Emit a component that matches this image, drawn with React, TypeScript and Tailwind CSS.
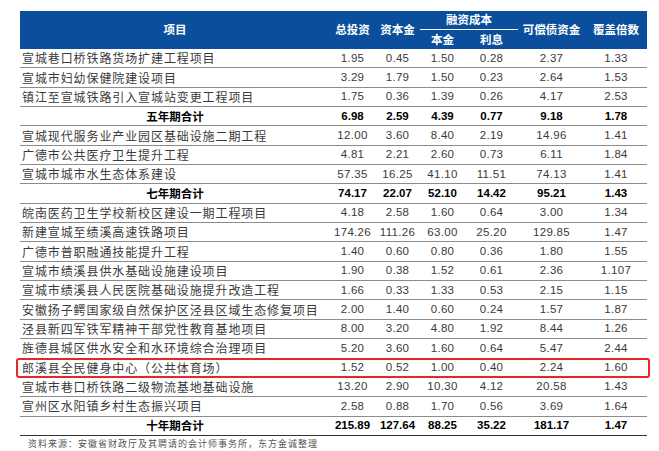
const rows: { name?: string; total?: string; v: string[]; hl?: boolean }[] = [
  { name: "宣城巷口桥铁路货场扩建工程项目", v: ["1.95", "0.45", "1.50", "0.28", "2.37", "1.33"] },
  { name: "宣城市妇幼保健院建设项目", v: ["3.29", "1.79", "1.50", "0.23", "2.64", "1.53"] },
  { name: "镇江至宣城铁路引入宣城站变更工程项目", v: ["1.75", "0.36", "1.39", "0.26", "4.17", "2.53"] },
  { total: "五年期合计", v: ["6.98", "2.59", "4.39", "0.77", "9.18", "1.78"] },
  { name: "宣城现代服务业产业园区基础设施二期工程", v: ["12.00", "3.60", "8.40", "2.19", "14.96", "1.41"] },
  { name: "广德市公共医疗卫生提升工程", v: ["4.81", "2.21", "2.60", "0.73", "6.11", "1.84"] },
  { name: "宣城市城市水生态体系建设", v: ["57.35", "16.25", "41.10", "11.51", "74.13", "1.41"] },
  { total: "七年期合计", v: ["74.17", "22.07", "52.10", "14.42", "95.21", "1.43"] },
  { name: "皖南医药卫生学校新校区建设一期工程项目", v: ["4.18", "2.58", "1.60", "0.64", "3.00", "1.34"] },
  { name: "新建宣城至绩溪高速铁路项目", v: ["174.26", "111.26", "63.00", "25.20", "129.85", "1.47"] },
  { name: "广德市普职融通技能提升工程", v: ["1.40", "0.60", "0.80", "0.36", "1.80", "1.55"] },
  { name: "宣城市绩溪县供水基础设施建设项目", v: ["1.90", "0.38", "1.52", "0.61", "2.36", "1.107"] },
  { name: "宣城市绩溪县人民医院基础设施提升改造工程", v: ["1.66", "0.33", "1.33", "0.53", "2.15", "1.15"] },
  { name: "安徽扬子鳄国家级自然保护区泾县区域生态修复项目", v: ["2.00", "1.40", "0.60", "0.24", "1.57", "1.87"] },
  { name: "泾县新四军铁军精神干部党性教育基地项目", v: ["8.00", "3.20", "4.80", "1.92", "8.44", "1.26"] },
  { name: "旌德县城区供水安全和水环境综合治理项目", v: ["5.20", "3.60", "1.60", "0.64", "5.47", "2.44"] },
  { name: "郎溪县全民健身中心（公共体育场）", v: ["1.52", "0.52", "1.00", "0.40", "2.24", "1.60"], hl: true },
  { name: "宣城市巷口桥铁路二级物流基地基础设施", v: ["13.20", "2.90", "10.30", "4.12", "20.58", "1.43"] },
  { name: "宣州区水阳镇乡村生态振兴项目", v: ["2.58", "0.88", "1.70", "0.56", "3.69", "1.64"] },
  { total: "十年期合计", v: ["215.89", "127.64", "88.25", "35.22", "181.17", "1.47"] },
];

const numW = ["w-[45px]", "w-[45px]", "w-[45px]", "w-[53px]", "w-[67px]", "w-[62px]"];

export default function App() {
  return (
    <div className="w-[659px] h-[451px] bg-white pt-[11px] pl-[20px] font-['Noto_Sans_CJK_SC',sans-serif]">
      <div className="w-[627px]">
        {/* header */}
        <div className="flex h-[38px] bg-[#0b4f9c] text-white font-bold text-[11.5px]">
          <div className="w-[310px] flex items-center justify-center">项目</div>
          <div className="w-[45px] flex items-center justify-center">总投资</div>
          <div className="w-[45px] flex items-center justify-center">资本金</div>
          <div className="w-[98px] flex flex-col">
            <div className="h-[19px] flex items-center justify-center border-b border-white">融资成本</div>
            <div className="flex flex-1">
              <div className="w-[45px] flex items-center justify-center">本金</div>
              <div className="w-[53px] flex items-center justify-center">利息</div>
            </div>
          </div>
          <div className="w-[67px] flex items-center justify-center">可偿债资金</div>
          <div className="w-[62px] flex items-center justify-center">覆盖倍数</div>
        </div>
        {rows.map((r, i) => (
          <div
            key={i}
            className={`relative flex h-[19.35px] border-b-[1.5px] ${
              i === rows.length - 1 ? "border-[#333]" : "border-[#8c8c8c]"
            } ${r.total ? "font-bold text-black" : "text-[#3a3a3a]"}`}
          >
            {r.total ? (
              <div className="w-[310px] flex items-center justify-center text-[11.5px]">{r.total}</div>
            ) : (
              <div className="w-[310px] flex items-center pl-[2px] text-[12px] tracking-[0.9px] whitespace-nowrap">{r.name}</div>
            )}
            {r.v.map((x, j) => (
              <div
                key={j}
                className={`${numW[j]} flex items-center justify-center text-[11.5px] font-['Liberation_Sans',sans-serif] ${
                  r.total ? "" : "tracking-[0.3px]"
                }`}
              >
                {x}
              </div>
            ))}
            {r.hl && (
              <div className="absolute left-[-4px] right-[-3px] top-[-1px] bottom-[-1px] border-2 border-[#e6262b] rounded-[3px]" />
            )}
          </div>
        ))}
      </div>
      <div className="pl-[8px] pt-[1px] text-[9px] text-[#555] tracking-[1px]">
        资料来源：安徽省财政厅及其聘请的会计师事务所，东方金诚整理
      </div>
    </div>
  );
}
